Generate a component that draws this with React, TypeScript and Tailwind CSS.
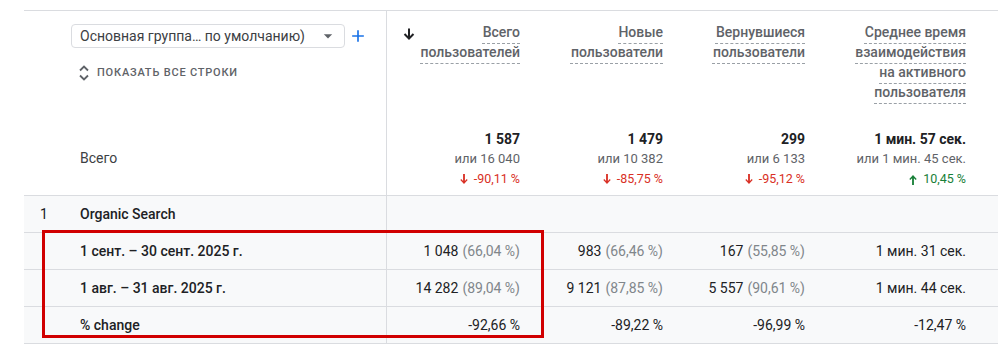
import React from "react";

const columns = [
  { title: ["Всего", "пользователей"], total: "1 587", prev: "или 16 040", change: "-90,11 %", up: false },
  { title: ["Новые", "пользователи"], total: "1 479", prev: "или 10 382", change: "-85,75 %", up: false },
  { title: ["Вернувшиеся", "пользователи"], total: "299", prev: "или 6 133", change: "-95,12 %", up: false },
  {
    title: ["Среднее время", "взаимодействия", "на активного", "пользователя"],
    total: "1 мин. 57 сек.",
    prev: "или 1 мин. 45 сек.",
    change: "10,45 %",
    up: true,
  },
];

const rows = [
  {
    label: "1 сент. – 30 сент. 2025 г.",
    values: [
      ["1 048", "(66,04 %)"],
      ["983", "(66,46 %)"],
      ["167", "(55,85 %)"],
      ["1 мин. 31 сек.", ""],
    ],
  },
  {
    label: "1 авг. – 31 авг. 2025 г.",
    values: [
      ["14 282", "(89,04 %)"],
      ["9 121", "(87,85 %)"],
      ["5 557", "(90,61 %)"],
      ["1 мин. 44 сек.", ""],
    ],
  },
  {
    label: "% change",
    values: [
      ["-92,66 %", ""],
      ["-89,22 %", ""],
      ["-96,99 %", ""],
      ["-12,47 %", ""],
    ],
  },
];

const grid = "grid grid-cols-[362px_150px_143px_142px_161px_1fr]";

const SortArrow = () => (
  <svg viewBox="0 0 12 12" className="w-[12px] h-[12px] mt-[6px] text-[#202124]" fill="none" stroke="currentColor" strokeWidth="2">
    <path d="M6 0.5v10M1.5 6l4.5 4.5 4.5-4.5" />
  </svg>
);

const SmallArrow = ({ up }: { up: boolean }) => (
  <svg viewBox="0 0 8 12" className={`w-[8px] h-[11px] ${up ? "rotate-180" : ""}`} fill="currentColor">
    <path d="M3 0h2v7.5l2-2 1 1-4 4.5-4-4.5 1-1 2 2z" />
  </svg>
);

export default function App() {
  return (
    <div className="relative w-[998px] h-[347px] bg-white overflow-hidden font-['Roboto',sans-serif] text-[14px] text-[#202124]">
      <div className="ml-[24px] mt-[10px]">
        {/* Header */}
        <div className={`${grid} h-[186px] border-t border-b border-[#dadce0]`}>
          <div className="flex flex-col pl-[47px] pt-[13px] pb-[27px]">
            <div className="flex items-center">
              <div className="flex items-center w-[274px] h-[24px] border border-[#dadce0] rounded-[4px] pl-[8px] pr-[6px]">
                <span className="flex-1 text-[#3c4043] leading-[20px]">Основная группа… по умолчанию)</span>
                <svg viewBox="0 0 24 24" className="w-[20px] h-[20px] text-[#5f6368]" fill="currentColor">
                  <path d="M7 10l5 5 5-5z" />
                </svg>
              </div>
              <svg viewBox="0 0 24 24" className="w-[20px] h-[20px] ml-[3px] text-[#1a73e8]" fill="currentColor">
                <path d="M19 13h-6v6h-2v-6H5v-2h6V5h2v6h6v2z" />
              </svg>
            </div>
            <div className="flex items-center mt-[17px] h-[16px] pl-[7px]">
              <svg viewBox="0 0 12 16" className="w-[12px] h-[16px] text-[#5f6368]" fill="none" stroke="currentColor" strokeWidth="1.8">
                <path d="M2 5.5l4-4 4 4M2 10.5l4 4 4-4" />
              </svg>
              <span className="ml-[7px] text-[11px] font-medium tracking-[0.8px] text-[#5f6368]">ПОКАЗАТЬ ВСЕ СТРОКИ</span>
            </div>
            <div className="mt-auto pl-[9px] leading-[20px] text-[#3c4043]">Всего</div>
          </div>

          {columns.map((col, i) => (
            <div
              key={i}
              className={`flex flex-col pr-[16px] pt-[11px] pb-[6px] ${i === 0 ? "border-l border-[#dadce0] pl-[16px]" : ""}`}
            >
              <div className="flex justify-between items-start">
                {i === 0 ? <SortArrow /> : <span />}
                <div className="text-right leading-[20px] text-[#5f6368] font-medium">
                  {col.title.map((t) => (
                    <div key={t}>
                      <span className="underline decoration-dashed decoration-[#9aa0a6] decoration-1 underline-offset-[6px]">
                        {t}
                      </span>
                    </div>
                  ))}
                </div>
              </div>
              <div className="mt-auto text-right">
                <div className="font-bold leading-[20px]">{col.total}</div>
                <div className="text-[13px] leading-[20px] text-[#5f6368]">{col.prev}</div>
                <div
                  className={`flex justify-end items-center gap-[6px] text-[12.5px] leading-[20px] ${
                    col.up ? "text-[#188038]" : "text-[#d93025]"
                  }`}
                >
                  <SmallArrow up={col.up} />
                  <span>{col.change}</span>
                </div>
              </div>
            </div>
          ))}
          <div />
        </div>

        {/* Organic Search */}
        <div className={`${grid} h-[37px] border-b border-[#dadce0] bg-[#f8f9fa]`}>
          <div className="flex items-center pl-[16px]">
            <span className="w-[40px]">1</span>
            <span className="font-medium">Organic Search</span>
          </div>
          <div className="border-l border-[#dadce0]" />
          <div />
          <div />
          <div />
          <div />
        </div>

        {rows.map((row) => (
          <div key={row.label} className={`${grid} h-[37px] border-b border-[#dadce0] bg-[#f8f9fa]`}>
            <div className="flex items-center pl-[56px] font-medium">{row.label}</div>
            {row.values.map(([v, p], i) => (
              <div
                key={i}
                className={`flex items-center justify-end pr-[16px] ${i === 0 ? "border-l border-[#dadce0]" : ""}`}
              >
                <span>{v}</span>
                {p && <span className="ml-[4px] text-[#80868b]">{p}</span>}
              </div>
            ))}
            <div />
          </div>
        ))}
      </div>

      {/* annotation box */}
      <div className="absolute left-[42px] top-[230px] w-[502px] h-[108px] border-[3px] border-[#d10000]" />
    </div>
  );
}
